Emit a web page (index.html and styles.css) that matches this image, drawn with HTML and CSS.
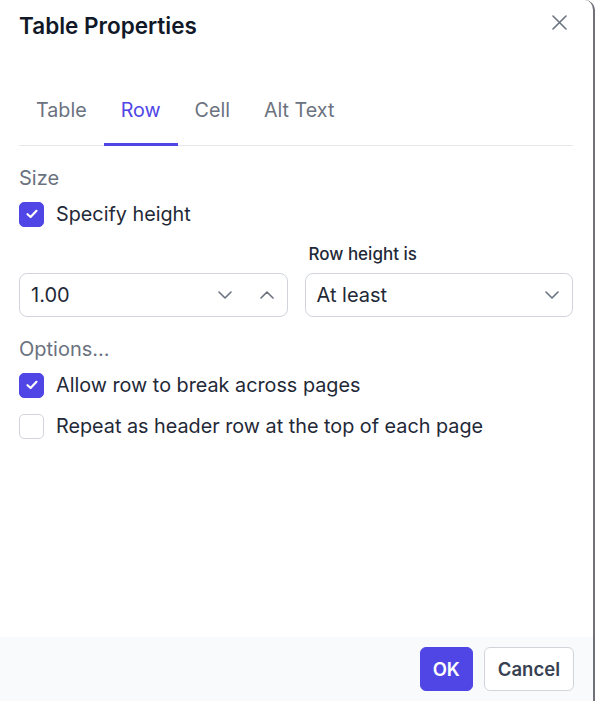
FILE: index.html
```html
<!DOCTYPE html>
<html lang="en">
<head>
<meta charset="utf-8">
<title>Table Properties</title>
<link rel="stylesheet" href="styles.css">
</head>
<body>
<div class="dialog">
  <header class="head">
    <h1 class="title">Table Properties</h1>
    <button class="close" aria-label="Close">
      <svg width="16" height="16" viewBox="0 0 16 16"><path d="M2 2 L15 15 M15 2 L2 15" stroke="#6b7280" stroke-width="1.6" stroke-linecap="round" fill="none"/></svg>
    </button>
  </header>
  <nav class="tabs">
    <span class="tab">Table</span>
    <span class="tab active">Row</span>
    <span class="tab">Cell</span>
    <span class="tab">Alt Text</span>
  </nav>
  <main class="content">
    <div class="section-label">Size</div>
    <label class="check">
      <span class="box checked"><svg width="14" height="14" viewBox="0 0 14 14"><path d="M2.5 7.2 L5.6 10 L11.5 3.8" stroke="#fff" stroke-width="2.2" stroke-linecap="round" stroke-linejoin="round" fill="none"/></svg></span>
      <span>Specify height</span>
    </label>
    <div class="fields">
      <div class="field">
        <div class="field-label">&nbsp;</div>
        <div class="input">
          <span class="value">1.00</span>
          <span class="spin">
            <svg width="14" height="8" viewBox="0 0 14 8"><path d="M1 1 L7 7 L13 1" stroke="#6b7280" stroke-width="1.6" stroke-linecap="round" stroke-linejoin="round" fill="none"/></svg>
            <svg width="14" height="8" viewBox="0 0 14 8"><path d="M1 7 L7 1 L13 7" stroke="#6b7280" stroke-width="1.6" stroke-linecap="round" stroke-linejoin="round" fill="none"/></svg>
          </span>
        </div>
      </div>
      <div class="field">
        <div class="field-label">Row height is</div>
        <div class="input">
          <span class="value">At least</span>
          <svg width="14" height="8" viewBox="0 0 14 8"><path d="M1 1 L7 7 L13 1" stroke="#6b7280" stroke-width="1.6" stroke-linecap="round" stroke-linejoin="round" fill="none"/></svg>
        </div>
      </div>
    </div>
    <div class="section-label options">Options...</div>
    <label class="check">
      <span class="box checked"><svg width="14" height="14" viewBox="0 0 14 14"><path d="M2.5 7.2 L5.6 10 L11.5 3.8" stroke="#fff" stroke-width="2.2" stroke-linecap="round" stroke-linejoin="round" fill="none"/></svg></span>
      <span>Allow row to break across pages</span>
    </label>
    <label class="check">
      <span class="box"></span>
      <span>Repeat as header row at the top of each page</span>
    </label>
  </main>
  <footer class="foot">
    <button class="btn primary">OK</button>
    <button class="btn">Cancel</button>
  </footer>
</div>
</body>
</html>
```
FILE: styles.css
```css
* { box-sizing: border-box; }
html, body { margin: 0; padding: 0; background: #ffffff; }
body {
  font-family: Inter, "Noto Sans", "Liberation Sans", sans-serif;
  color: #1f2937;
  width: 598px;
  height: 701px;
  overflow: hidden;
}
.dialog {
  width: 595px;
  height: 701px;
  display: flex;
  flex-direction: column;
  background: #fff;
  border-right: 2px solid #71717a;
  border-top-right-radius: 10px;
}
.head {
  display: flex;
  align-items: center;
  justify-content: space-between;
  padding: 11px 26px 0 19px;
  height: 40px;
}
.title {
  margin: 0;
  font-size: 22.5px;
  font-weight: 600;
  line-height: 28px;
  color: #111827;
}
.close {
  border: 0;
  background: none;
  padding: 0;
  width: 16px;
  height: 16px;
  margin-top: -7px;
  display: flex;
}
.tabs {
  display: flex;
  margin: 47px 20px 0 19px;
  border-bottom: 1px solid #e5e7eb;
}
.tab {
  padding: 9px 17px 19px;
  font-size: 19.7px;
  line-height: 28px;
  color: #6b7280;
  border-bottom: 3px solid transparent;
  margin-bottom: -1px;
}
.tab.active {
  color: #4f46e5;
  border-bottom-color: #4f46e5;
}
.content {
  flex: 1;
  padding: 20px 20px 0 19px;
  display: flex;
  flex-direction: column;
}
.section-label {
  font-size: 20px;
  line-height: 24px;
  color: #6b7280;
}
.options { margin-top: 20px; }
.check {
  display: flex;
  align-items: center;
  gap: 12px;
  font-size: 19.8px;
  line-height: 28px;
  color: #1f2937;
  margin-top: 10px;
}
.check + .check { margin-top: 13px; }
.box {
  width: 25px;
  height: 25px;
  border-radius: 5px;
  border: 1px solid #d1d5db;
  background: #fff;
  display: flex;
  align-items: center;
  justify-content: center;
  flex: none;
}
.box.checked {
  background: #4f46e5;
  border-color: #4f46e5;
}
.fields {
  display: grid;
  grid-template-columns: 1fr 1fr;
  gap: 17px;
  margin-top: 15px;
}
.field-label {
  font-size: 17px;
  font-weight: 500;
  line-height: 22px;
  color: #1f2937;
  padding-left: 4px;
  margin-bottom: 8px;
}
.input {
  height: 44px;
  border: 1px solid #d1d5db;
  border-radius: 8px;
  display: flex;
  align-items: center;
  justify-content: space-between;
  padding: 0 13px 0 11px;
  font-size: 20px;
  color: #1f2937;
}
.spin {
  display: flex;
  gap: 28px;
}
.foot {
  height: 64px;
  background: #f9fafb;
  display: flex;
  justify-content: flex-end;
  align-items: center;
  gap: 11px;
  padding: 0 19px 0 19px;
}
.btn {
  height: 44px;
  border-radius: 6px;
  border: 1px solid #d1d5db;
  background: #fff;
  font-family: inherit;
  font-size: 18.5px;
  font-weight: 600;
  color: #374151;
  padding: 0 13px;
}
.btn.primary {
  background: #4f46e5;
  border-color: #4f46e5;
  color: #fff;
  padding: 0 12px;
}
```
